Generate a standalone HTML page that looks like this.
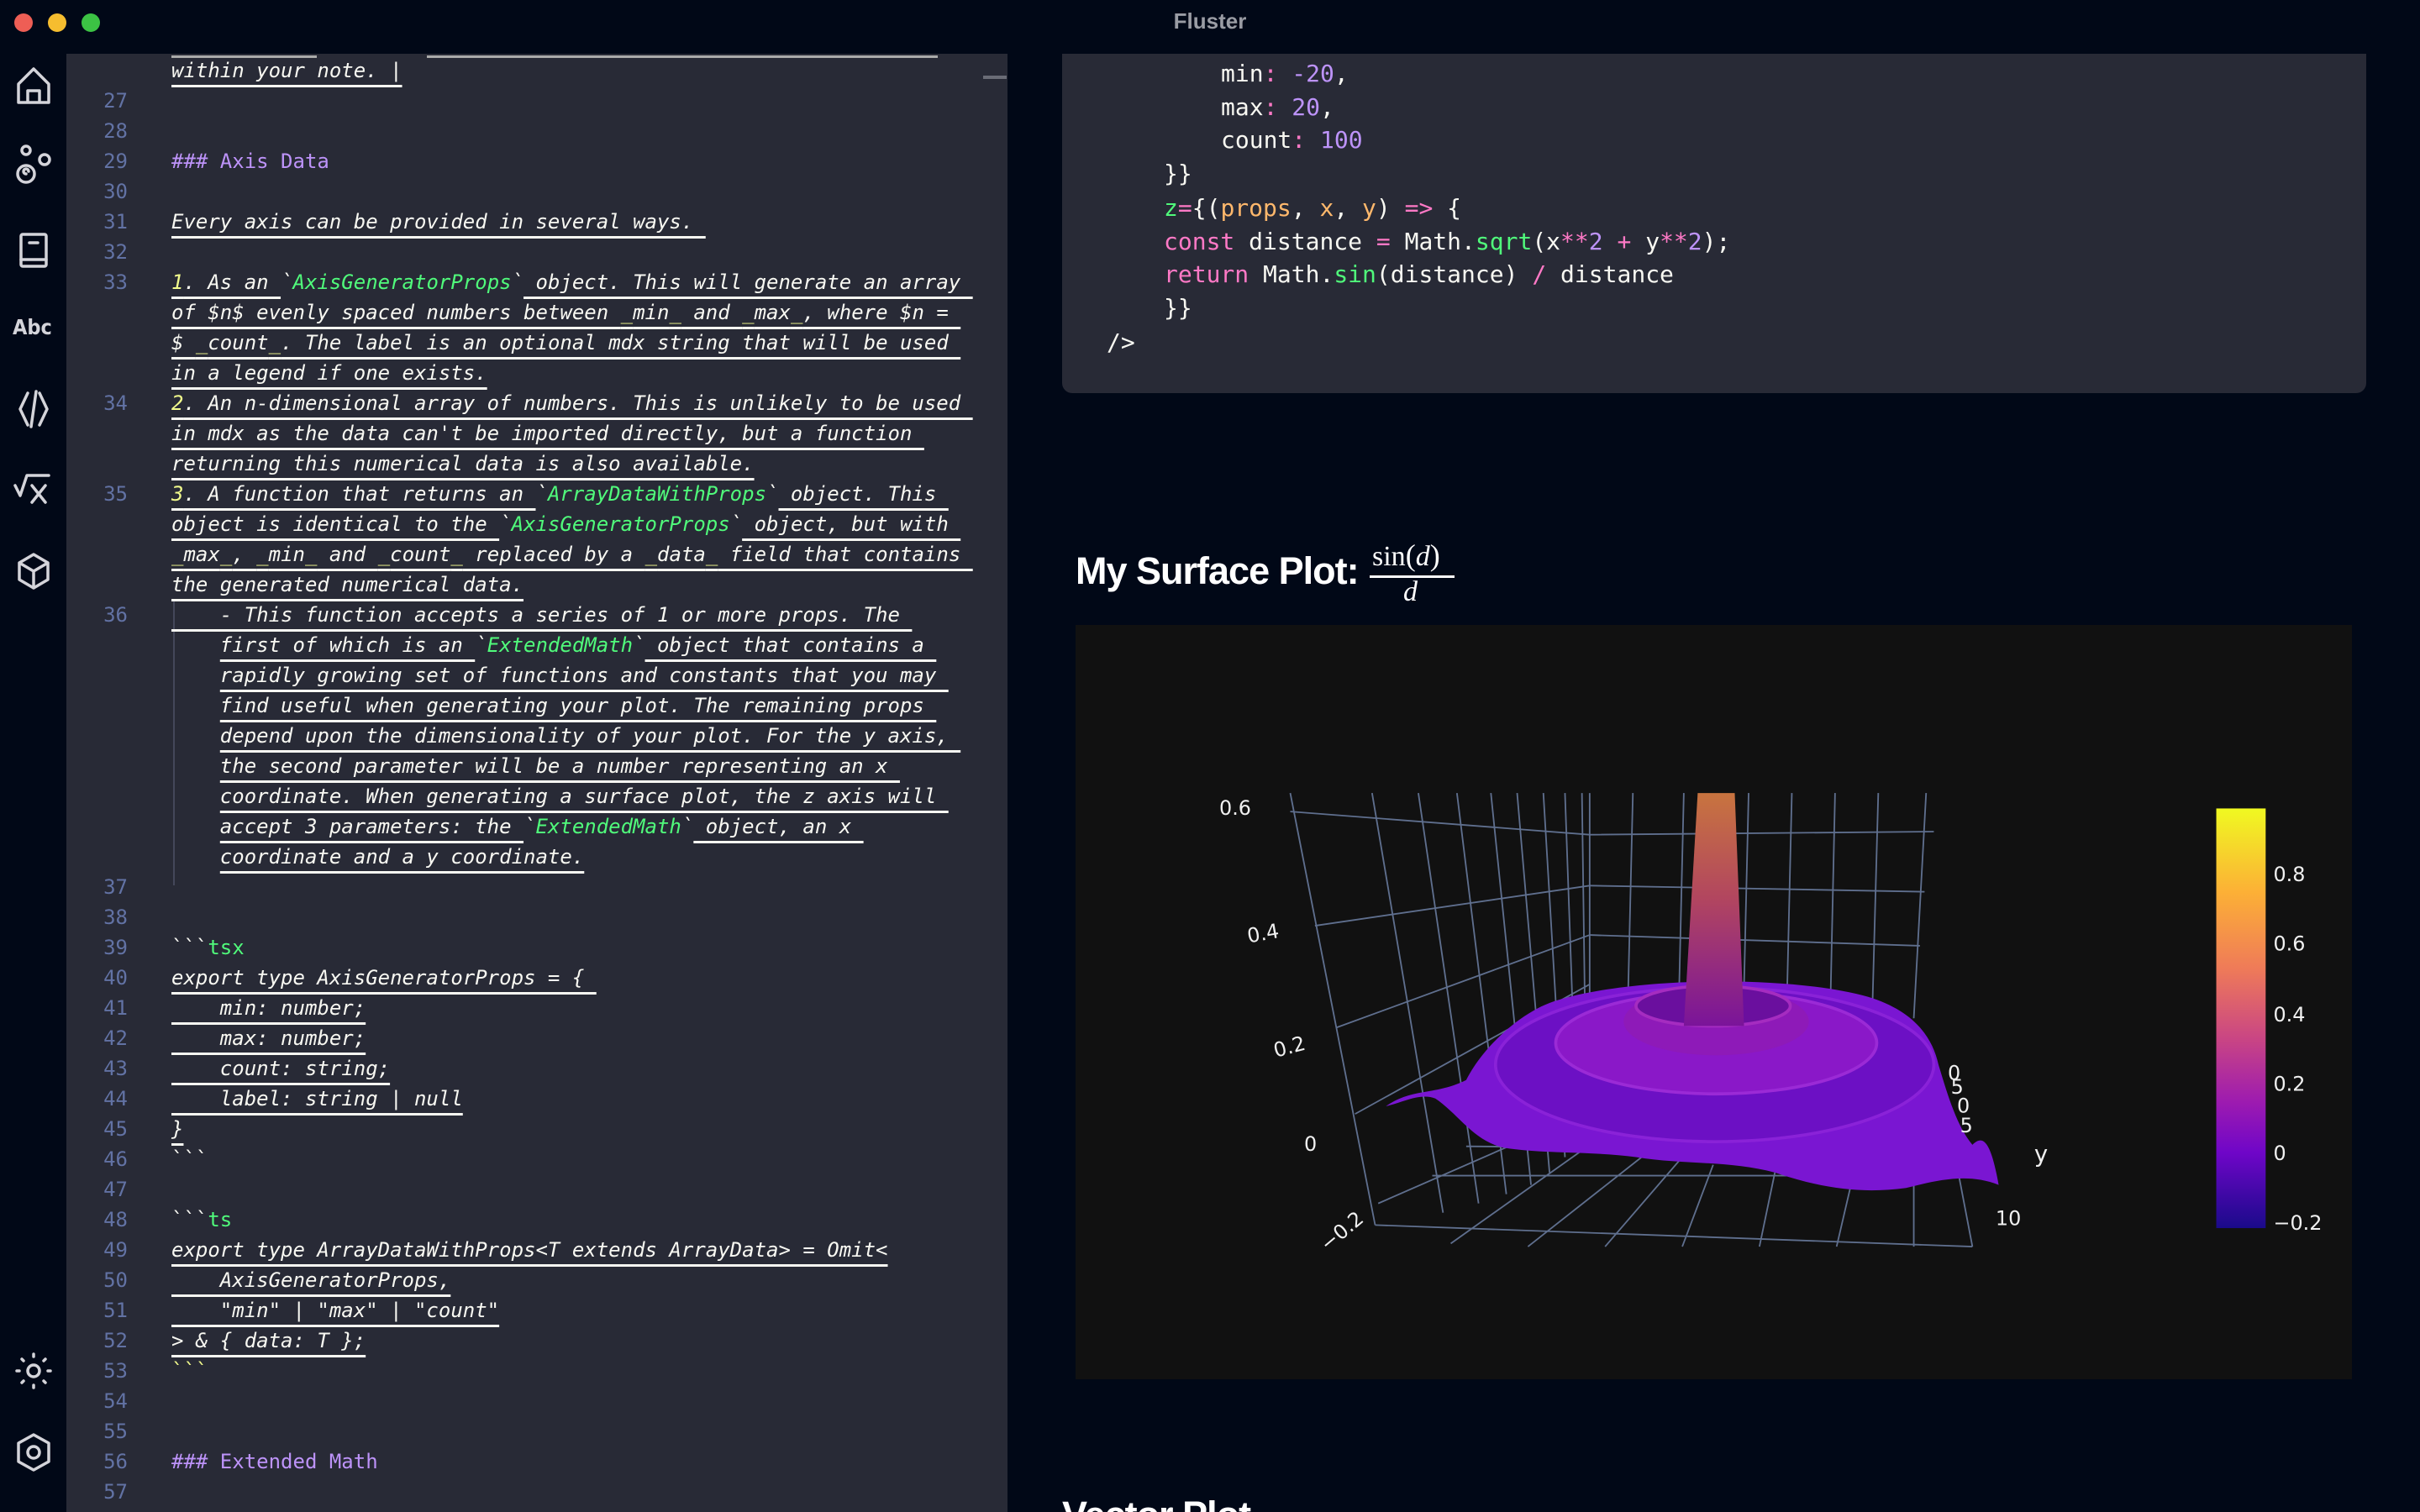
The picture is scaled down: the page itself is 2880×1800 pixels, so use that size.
<!DOCTYPE html>
<html style="width:2880px;height:1800px;overflow:hidden"><head><meta charset="utf-8"><style>
*{margin:0;padding:0;box-sizing:border-box}
body{width:2880px;height:1800px;overflow:hidden;background:#010817;position:relative;font-family:"Liberation Sans",sans-serif}
.abs{position:absolute}
#editor{left:79px;top:64px;width:1120px;height:1736px;background:#282a36;overflow:hidden}
.row{position:absolute;left:0;height:36px;line-height:36px;font-family:"DejaVu Sans Mono","Liberation Mono",monospace;font-size:24px;white-space:pre;color:#f8f8f2}
.ln{position:absolute;left:0;width:73px;text-align:right;color:#6272a4}
.tx{position:absolute;left:125px;font-style:italic}
.u{text-decoration:underline;text-decoration-color:#f8f8f2;text-decoration-thickness:3px;text-underline-offset:9px}
.g{color:#50fa7b;font-style:italic}
.y{color:#f1fa8c}
.h{color:#bd93f9;font-style:normal}
.code{left:1264px;top:64px;width:1552px;height:404px;background:#282a36;border-radius:0 0 12px 12px}
.cl{position:absolute;font-family:"DejaVu Sans Mono","Liberation Mono",monospace;font-size:28px;line-height:40px;white-space:pre;color:#f8f8f2}
.p{color:#ff79c6}.pu{color:#bd93f9}.o{color:#ffb86c}.gr{color:#50fa7b}
</style></head><body>
<div class="abs" style="left:0;top:0;width:2880px;height:64px;background:#010817"></div>
<div class="abs" style="left:17px;top:16px;width:22px;height:22px;border-radius:50%;background:#ee5e55"></div>
<div class="abs" style="left:57px;top:16px;width:22px;height:22px;border-radius:50%;background:#f6bd2f"></div>
<div class="abs" style="left:97px;top:16px;width:22px;height:22px;border-radius:50%;background:#3cc244"></div>
<div class="abs" style="left:1340px;top:10px;width:200px;text-align:center;color:#9a9ca4;font-size:26px;font-weight:bold">Fluster</div>

<svg class="abs" style="left:0;top:0" width="79" height="1800" viewBox="0 0 79 1800" fill="none" stroke="#d4d4da" stroke-width="3.5" stroke-linecap="round" stroke-linejoin="round">
<path d="M22 122 V100 L40 82 L58 100 V122 Z M33 122 V108 H47 V122"/>
<circle cx="31" cy="179" r="5"/><circle cx="53" cy="190" r="6"/><circle cx="31" cy="207" r="10"/><path d="M31 207 a3 3 0 1 1 3 -3"/>
<rect x="25" y="279" width="30" height="38" rx="2"/><path d="M25 309 H55 M35 289 H45"/>
<path d="M33 468 L24 487 L33 506 M47 468 L56 487 L47 506 M43 466 L37 508"/>
<path d="M18 578 L24 590 L32 566 H58 M38 578 L54 598 M54 578 L38 598"/>
<path d="M40 660 L57 670 V690 L40 700 L23 690 V670 Z M23 670 L40 680 L57 670 M40 680 V700"/>
<circle cx="40" cy="1632" r="7"/><path d="M40 1612 v3 M40 1649 v3 M20 1632 h3 M57 1632 h3 M26 1618 l2 2 M52 1644 l2 2 M54 1618 l-2 2 M28 1644 l-2 2"/>
<path d="M40 1708 L58 1718 V1740 L40 1750 L22 1740 V1718 Z"/><circle cx="40" cy="1729" r="7"/>
</svg>
<div class="abs" style="left:15px;top:375px;color:#d4d4da;font-size:25px;font-weight:bold;font-family:'DejaVu Sans Condensed','Liberation Sans',sans-serif">Abc</div>

<div id="editor" class="abs">
<div class="abs" style="left:125px;top:2px;width:173px;height:3px;background:#aaa"></div>
<div class="abs" style="left:429px;top:2px;width:608px;height:3px;background:#aaa"></div>
<div class="abs" style="left:1091px;top:26px;width:28px;height:4px;background:#6a6c76"></div>
<div class="abs" style="left:127px;top:650px;width:2px;height:340px;background:#44475a"></div>
<div class="row" style="top:2px"><span class="tx"><span class="u">within your note. |</span></span></div>
<div class="row" style="top:38px"><span class="ln">27</span></div>
<div class="row" style="top:74px"><span class="ln">28</span></div>
<div class="row" style="top:110px"><span class="ln">29</span><span class="tx h">### Axis Data</span></div>
<div class="row" style="top:146px"><span class="ln">30</span></div>
<div class="row" style="top:182px"><span class="ln">31</span><span class="tx"><span class="u">Every axis can be provided in several ways. </span></span></div>
<div class="row" style="top:218px"><span class="ln">32</span></div>
<div class="row" style="top:254px"><span class="ln">33</span><span class="tx"><span class="u"><span class="y">1</span>. As an </span>&#96;<span class="g">AxisGeneratorProps</span>&#96;<span class="u"> object. This will generate an array </span></span></div>
<div class="row" style="top:290px"><span class="tx"><span class="u">of $n$ evenly spaced numbers between <span class="y">_</span>min<span class="y">_</span> and <span class="y">_</span>max<span class="y">_</span>, where $n = </span></span></div>
<div class="row" style="top:326px"><span class="tx"><span class="u">$ <span class="y">_</span>count<span class="y">_</span>. The label is an optional mdx string that will be used </span></span></div>
<div class="row" style="top:362px"><span class="tx"><span class="u">in a legend if one exists.</span></span></div>
<div class="row" style="top:398px"><span class="ln">34</span><span class="tx"><span class="u"><span class="y">2</span>. An n-dimensional array of numbers. This is unlikely to be used </span></span></div>
<div class="row" style="top:434px"><span class="tx"><span class="u">in mdx as the data can't be imported directly, but a function </span></span></div>
<div class="row" style="top:470px"><span class="tx"><span class="u">returning this numerical data is also available.</span></span></div>
<div class="row" style="top:506px"><span class="ln">35</span><span class="tx"><span class="u"><span class="y">3</span>. A function that returns an </span>&#96;<span class="g">ArrayDataWithProps</span>&#96;<span class="u"> object. This </span></span></div>
<div class="row" style="top:542px"><span class="tx"><span class="u">object is identical to the </span>&#96;<span class="g">AxisGeneratorProps</span>&#96;<span class="u"> object, but with </span></span></div>
<div class="row" style="top:578px"><span class="tx"><span class="u"><span class="y">_</span>max<span class="y">_</span>, <span class="y">_</span>min<span class="y">_</span> and <span class="y">_</span>count<span class="y">_</span> replaced by a <span class="y">_</span>data<span class="y">_</span> field that contains </span></span></div>
<div class="row" style="top:614px"><span class="tx"><span class="u">the generated numerical data.</span></span></div>
<div class="row" style="top:650px"><span class="ln">36</span><span class="tx"><span class="u">    - This function accepts a series of 1 or more props. The </span></span></div>
<div class="row" style="top:686px"><span class="tx">    <span class="u">first of which is an </span>&#96;<span class="g">ExtendedMath</span>&#96;<span class="u"> object that contains a </span></span></div>
<div class="row" style="top:722px"><span class="tx">    <span class="u">rapidly growing set of functions and constants that you may </span></span></div>
<div class="row" style="top:758px"><span class="tx">    <span class="u">find useful when generating your plot. The remaining props </span></span></div>
<div class="row" style="top:794px"><span class="tx">    <span class="u">depend upon the dimensionality of your plot. For the y axis, </span></span></div>
<div class="row" style="top:830px"><span class="tx">    <span class="u">the second parameter will be a number representing an x </span></span></div>
<div class="row" style="top:866px"><span class="tx">    <span class="u">coordinate. When generating a surface plot, the z axis will </span></span></div>
<div class="row" style="top:902px"><span class="tx">    <span class="u">accept 3 parameters: the </span>&#96;<span class="g">ExtendedMath</span>&#96;<span class="u"> object, an x </span></span></div>
<div class="row" style="top:938px"><span class="tx">    <span class="u">coordinate and a y coordinate.</span></span></div>
<div class="row" style="top:974px"><span class="ln">37</span></div>
<div class="row" style="top:1010px"><span class="ln">38</span></div>
<div class="row" style="top:1046px"><span class="ln">39</span><span class="tx" style="font-style:normal">&#96;&#96;&#96;<span class="gr">tsx</span></span></div>
<div class="row" style="top:1082px"><span class="ln">40</span><span class="tx"><span class="u">export type AxisGeneratorProps = { </span></span></div>
<div class="row" style="top:1118px"><span class="ln">41</span><span class="tx"><span class="u">    min: number;</span></span></div>
<div class="row" style="top:1154px"><span class="ln">42</span><span class="tx"><span class="u">    max: number;</span></span></div>
<div class="row" style="top:1190px"><span class="ln">43</span><span class="tx"><span class="u">    count: string;</span></span></div>
<div class="row" style="top:1226px"><span class="ln">44</span><span class="tx"><span class="u">    label: string | null</span></span></div>
<div class="row" style="top:1262px"><span class="ln">45</span><span class="tx"><span class="u">}</span></span></div>
<div class="row" style="top:1298px"><span class="ln">46</span><span class="tx" style="font-style:normal">&#96;&#96;&#96;</span></div>
<div class="row" style="top:1334px"><span class="ln">47</span></div>
<div class="row" style="top:1370px"><span class="ln">48</span><span class="tx" style="font-style:normal">&#96;&#96;&#96;<span class="gr">ts</span></span></div>
<div class="row" style="top:1406px"><span class="ln">49</span><span class="tx"><span class="u">export type ArrayDataWithProps&lt;T extends ArrayData&gt; = Omit&lt;</span></span></div>
<div class="row" style="top:1442px"><span class="ln">50</span><span class="tx"><span class="u">    AxisGeneratorProps,</span></span></div>
<div class="row" style="top:1478px"><span class="ln">51</span><span class="tx"><span class="u">    "min" | "max" | "count"</span></span></div>
<div class="row" style="top:1514px"><span class="ln">52</span><span class="tx"><span class="u">&gt; &amp; { data: T };</span></span></div>
<div class="row" style="top:1550px"><span class="ln">53</span><span class="tx y" style="font-style:normal">&#96;&#96;&#96;</span></div>
<div class="row" style="top:1586px"><span class="ln">54</span></div>
<div class="row" style="top:1622px"><span class="ln">55</span></div>
<div class="row" style="top:1658px"><span class="ln">56</span><span class="tx h">### Extended Math</span></div>
<div class="row" style="top:1694px"><span class="ln">57</span></div>
</div>

<div class="abs code"></div>
<div class="cl" style="left:1453px;top:68px">min<span class="p">:</span> <span class="pu">-20</span>,</div>
<div class="cl" style="left:1453px;top:108px">max<span class="p">:</span> <span class="pu">20</span>,</div>
<div class="cl" style="left:1453px;top:147px">count<span class="p">:</span> <span class="pu">100</span></div>
<div class="cl" style="left:1385px;top:187px">}}</div>
<div class="cl" style="left:1385px;top:228px"><span class="gr">z</span><span class="p">=</span>{(<span class="o">props</span>, <span class="o">x</span>, <span class="o">y</span>) <span class="p">=&gt;</span> {</div>
<div class="cl" style="left:1385px;top:268px"><span class="p">const</span> distance <span class="p">=</span> Math.<span class="gr">sqrt</span>(x<span class="p">**</span><span class="pu">2</span> <span class="p">+</span> y<span class="p">**</span><span class="pu">2</span>);</div>
<div class="cl" style="left:1385px;top:307px"><span class="p">return</span> Math.<span class="gr">sin</span>(distance) <span class="p">/</span> distance</div>
<div class="cl" style="left:1385px;top:347px">}}</div>
<div class="cl" style="left:1317px;top:388px">/&gt;</div>

<div class="abs" style="left:1280px;top:654px;color:#fff;font-size:45px;font-weight:bold;letter-spacing:-1px">My Surface Plot:</div>
<div class="abs" style="left:1633px;top:640px;color:#fff;font-family:'Liberation Serif',serif;font-size:34px">sin<span style="font-size:36px">(</span><i>d</i><span style="font-size:36px">)</span></div>
<div class="abs" style="left:1630px;top:685px;width:101px;height:3px;background:#fff"></div>
<div class="abs" style="left:1670px;top:686px;color:#fff;font-family:'Liberation Serif',serif;font-size:34px"><i>d</i></div>

<div class="abs" style="left:1280px;top:744px;width:1519px;height:898px;background:#111111"></div>

<svg class="abs" style="left:0;top:0" width="2880" height="1800" viewBox="0 0 1568 980">
<defs>
<linearGradient id="cb" x1="0" y1="0" x2="0" y2="1">
<stop offset="0" stop-color="#f0f921"/><stop offset="0.2" stop-color="#fcb036"/><stop offset="0.38" stop-color="#ef7b58"/><stop offset="0.55" stop-color="#c94584"/><stop offset="0.7" stop-color="#9d1bb0"/><stop offset="0.82" stop-color="#6f06c8"/><stop offset="1" stop-color="#1a0a8a"/>
</linearGradient>
<linearGradient id="sp" x1="0" y1="0" x2="0" y2="1">
<stop offset="0" stop-color="#c8743f"/><stop offset="0.45" stop-color="#b2465f"/><stop offset="1" stop-color="#7a149a"/>
</linearGradient>
</defs>
<g stroke="#5f6f8e" stroke-width="1" fill="none">
<path d="M836 514 L891 794 M836 526 L1030 541 M852 600 L1030 574 M866 666 L1030 606 M878 722 L1030 638"/>
<path d="M889 514 L935 786 M919 514 L958 780 M944 514 L976 774 M966 514 L992 768 M983 514 L1004 760 M1000 514 L1014 750 M1014 514 L1022 740 M1025 514 L1028 732 M1030 514 L1030 730"/>
<path d="M1030 541 L1253 539 M1030 574 L1247 578 M1030 606 L1244 613"/>
<path d="M1058 514 L1055 640 M1091 514 L1088 640 M1133 514 L1130 640 M1161 514 L1158 640 M1189 514 L1186 650 M1217 514 L1213 660 M1248 514 L1240 660"/>
<path d="M891 794 L1278 808 M928 762 L1265 762 M950 743 L1250 745 M893 780 L1030 720 M940 806 L1040 735 M990 808 L1070 745 M1040 808 L1090 750 M1090 808 L1110 755 M1140 808 L1150 760 M1190 808 L1200 765 M1240 808 L1240 768 M1278 808 L1265 740"/>
</g>
<path d="M898 717 C915 705 930 710 950 700 C960 680 985 655 1010 648 C1060 633 1160 632 1210 646 C1240 655 1252 672 1256 690 C1262 710 1268 730 1278 742 C1285 735 1290 740 1295 768 C1275 760 1255 765 1235 770 C1205 774 1180 770 1150 760 C1120 752 1090 755 1060 750 C1030 746 1000 748 975 744 C955 740 945 722 930 712 C920 708 908 715 898 717 Z" fill="#7a16d2"/>
<ellipse cx="1111" cy="690" rx="142" ry="50" fill="#6c10c4" stroke="#8a22d8" stroke-width="2"/>
<ellipse cx="1112" cy="676" rx="104" ry="33" fill="#8a18c8" stroke="#9b2ad6" stroke-width="2"/>
<ellipse cx="1112" cy="662" rx="60" ry="22" fill="#8e1ab8"/>
<ellipse cx="1110" cy="652" rx="50" ry="13" fill="#6a0f9e" stroke="#a52cc0" stroke-width="2"/>
<path d="M1100 514 L1124 514 L1130 665 L1091 665 Z" fill="url(#sp)"/>
<rect x="1436" y="524" width="32" height="272" fill="url(#cb)"/>
<g fill="#f0f0f0" font-family="DejaVu Sans, Liberation Sans, sans-serif" font-size="13">
<text x="790" y="528">0.6</text>
<text x="808" y="610" transform="rotate(-10 815 605)">0.4</text>
<text x="825" y="683" transform="rotate(-15 835 678)">0.2</text>
<text x="845" y="746">0</text>
<text x="852" y="805" transform="rotate(-40 865 797)">−0.2</text>
<text x="1318" y="753" font-size="15">y</text>
<text x="1293" y="794">10</text>
<text x="1262" y="700">0</text><text x="1264" y="709">5</text><text x="1268" y="721">0</text><text x="1270" y="734">5</text>
<text x="1473" y="571">0.8</text><text x="1473" y="616">0.6</text><text x="1473" y="662">0.4</text><text x="1473" y="707">0.2</text><text x="1473" y="752">0</text><text x="1473" y="797">−0.2</text>
</g>
</svg>
<div class="abs" style="left:1264px;top:1772px;width:400px;height:28px;overflow:hidden"><div style="position:absolute;left:0;top:6px;color:#fff;font-size:45px;font-weight:bold;letter-spacing:-1px;white-space:nowrap">Vector Plot</div></div>
</body></html>
